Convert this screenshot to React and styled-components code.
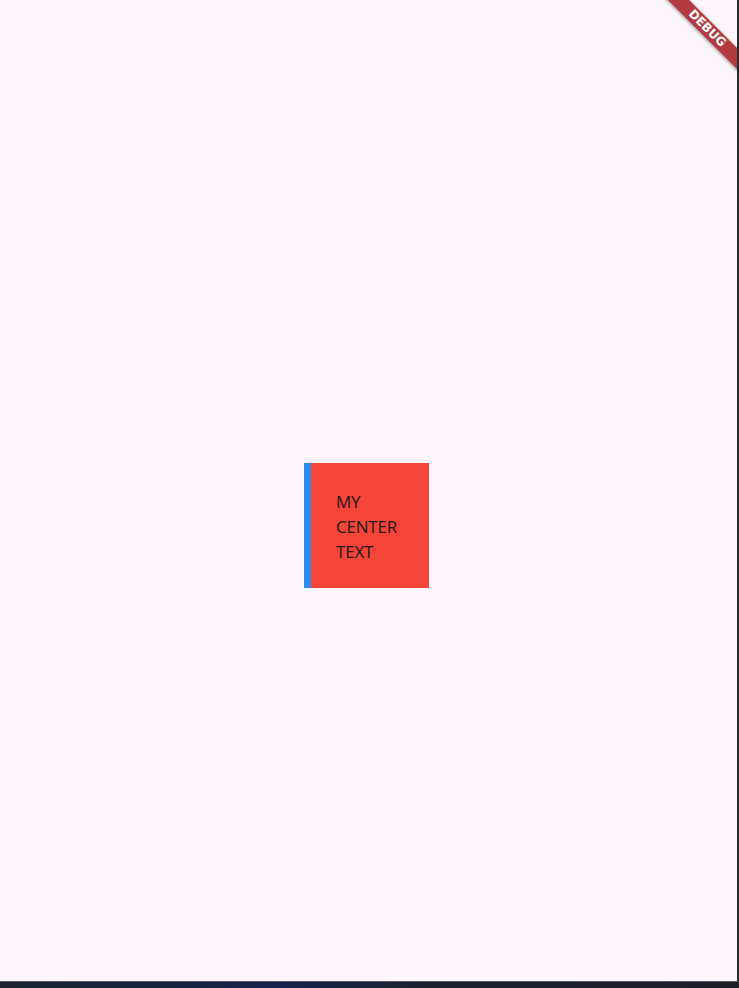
import React from 'react';
import styled, {createGlobalStyle} from 'styled-components';

const Global = createGlobalStyle`
    html, body {
        margin: 0;
        padding: 0;
        height: 100%;
        overflow: hidden;
    }
    #root {
        height: 100%;
    }
`;

const Screen = styled.div`
    display: flex;
    flex-direction: column;
    width: 739px;
    height: 988px;
    background: #1d2029;
`;

const Window = styled.div`
    position: relative;
    display: flex;
    height: 981px;
    border-right: 2px solid #2a2a2e;
    background: #fdf6fd;
    overflow: hidden;
`;

const Body = styled.main`
    flex: 1;
    display: flex;
    align-items: flex-start;
    justify-content: center;
    padding-top: 463px;
    padding-right: 4px;
`;

const Card = styled.div`
    display: flex;
    align-items: center;
    box-sizing: border-box;
    width: 125px;
    height: 125px;
    padding: 1px 0 0 25px;
    background: #f44538;
    border-left: 7px solid #2b8cee;
`;

const Label = styled.p`
    margin: 0;
    font-family: "Open Sans", "Noto Sans", sans-serif;
    font-size: 17px;
    line-height: 25px;
    letter-spacing: -0.2px;
    color: #221a1a;
`;

const Banner = styled.div`
    position: absolute;
    top: 21px;
    right: -30px;
    width: 120px;
    height: 15px;
    background: #b23a40;
    transform: rotate(45deg);
    box-shadow: 0 1px 4px rgba(0, 0, 0, 0.4);
    color: #fff;
    font-family: "DejaVu Sans", sans-serif;
    font-weight: 900;
    font-size: 12px;
    line-height: 15px;
    text-align: center;
`;

const Taskbar = styled.div`
    flex: 1;
    background: linear-gradient(90deg, #1c2233 0%, #16234a 38%, #1c2030 60%, #1d1f27 100%);
    border-top: 1px solid #55585e;
`;

export default function App() {
    return (
        <>
            <Global/>
            <Screen>
                <Window>
                    <Body>
                        <Card>
                            <Label>MY<br/>CENTER<br/>TEXT</Label>
                        </Card>
                    </Body>
                    <Banner>DEBUG</Banner>
                </Window>
                <Taskbar/>
            </Screen>
        </>
    );
}
